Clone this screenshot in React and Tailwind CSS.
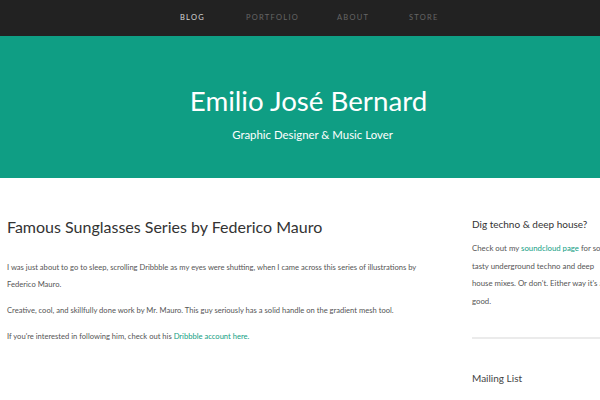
export default function App() {
  const font = { fontFamily: "Lato, 'Noto Sans', sans-serif" };
  return (
    <div className="relative w-[600px] h-[400px] overflow-hidden bg-white" style={font}>
      <nav className="h-[36px] bg-[#222222] flex items-center text-[7.5px] tracking-[0.17em] uppercase">
        <div className="flex pl-[180px]">
          <span className="text-[#d6d6d6] w-[66px]">Blog</span>
          <span className="text-[#666666] w-[91px]">Portfolio</span>
          <span className="text-[#666666] w-[72px]">About</span>
          <span className="text-[#666666]">Store</span>
        </div>
      </nav>
      <header className="h-[142px] bg-[#0f9e84] flex flex-col items-center text-white">
        <h1 className="mt-[47px] ml-[17px] text-[27.7px] leading-[36px] font-normal">Emilio José Bernard</h1>
        <p className="mt-[8px] ml-[25px] text-[11.4px] leading-[16px]">Graphic Designer &amp; Music Lover</p>
      </header>
      <div className="flex">
        <main className="w-[472px] shrink-0 pl-[7px] pt-[37px] text-[#555555]">
          <h2 className="text-[16px] leading-[24px] text-[#333333]">Famous Sunglasses Series by Federico Mauro</h2>
          <div className="w-[425px]">
            <p className="mt-[20px] text-[7.6px] leading-[17px]">
              I was just about to go to sleep, scrolling Dribbble as my eyes were shutting, when I came across this series of illustrations by Federico Mauro.
            </p>
            <p className="mt-[9px] text-[7.6px] leading-[17px]">
              Creative, cool, and skillfully done work by Mr. Mauro. This guy seriously has a solid handle on the gradient mesh tool.
            </p>
            <p className="mt-[9px] text-[7.6px] leading-[17px]">
              If you're interested in following him, check out his <span className="text-[#129e84]">Dribbble account here.</span>
            </p>
          </div>
        </main>
        <aside className="w-[128px] shrink-0 pt-[37px] text-[#555555]">
          <div className="w-[160px]">
            <h3 className="mt-[1px] text-[10px] leading-[16px] text-[#333333] whitespace-nowrap">Dig techno &amp; deep house?</h3>
            <p className="mt-[8px] text-[7.8px] leading-[17.5px] whitespace-nowrap">
              Check out my <span className="text-[#129e84]">soundcloud page</span> for some<br />
              tasty underground techno and deep<br />
              house mixes. Or don't. Either way it's all<br />
              good.
            </p>
          </div>
          <div className="mt-[27px] h-[2px] bg-[#ebebeb]" />
          <h3 className="mt-[32px] text-[10px] leading-[14px] text-[#444444]">Mailing List</h3>
        </aside>
      </div>
    </div>
  );
}
